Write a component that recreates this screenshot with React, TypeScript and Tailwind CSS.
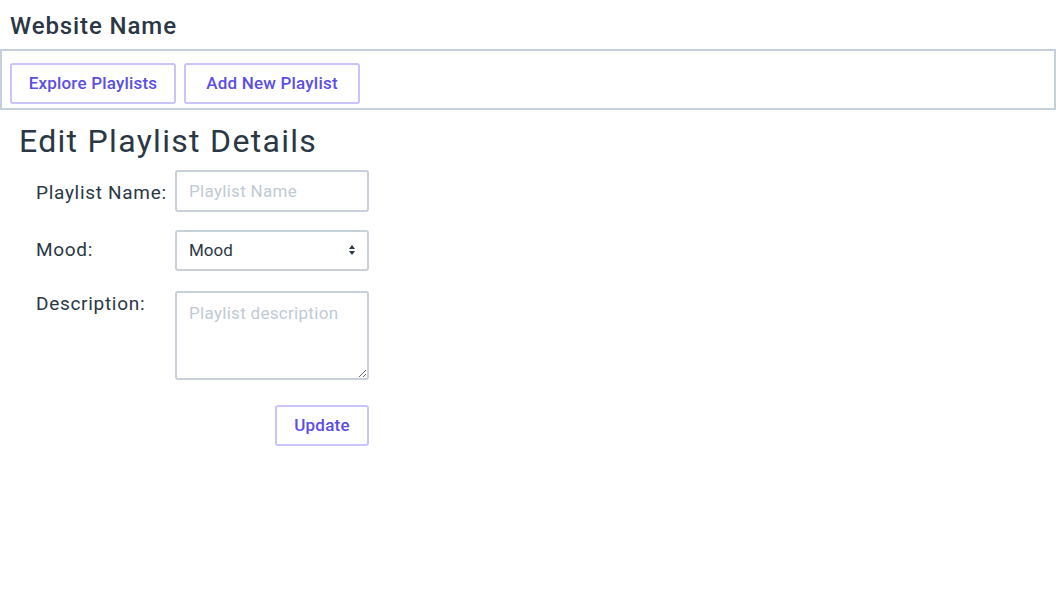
import React from 'react';

export default function App() {
    const font = { fontFamily: 'Roboto, "Liberation Sans", sans-serif' };
    return (
        <div className="min-h-screen bg-white text-[#2a3744]" style={font}>
            <header className="h-[49px] px-[10px] pt-[10px]">
                <h1 className="text-[24px] font-medium leading-[32px] tracking-[0.9px]">Website Name</h1>
            </header>

            <nav className="h-[61px] border-2 border-[#c5d0da] px-[8px] pt-[12px] flex gap-[8px]">
                {[
                    { label: 'Explore Playlists', w: 'w-[166px]' },
                    { label: 'Add New Playlist', w: 'w-[176px]' },
                ].map((b) => (
                    <button
                        key={b.label}
                        className={`${b.w} h-[41px] border-2 border-[#c9c4fb] rounded-[3px] text-[17px] font-medium tracking-[0.2px] text-[#5a4ee6] bg-white`}
                    >
                        {b.label}
                    </button>
                ))}
            </nav>

            <main className="px-[19px] pt-[11px]">
                <h2 className="text-[32px] leading-[40px] text-[#2a3744] tracking-[1.3px]">Edit Playlist Details</h2>

                <form className="ml-[17px] mt-[9px] grid grid-cols-[139px_194px] gap-y-[17px] items-start">
                    <label className="text-[19px] leading-[40px] tracking-[0.7px] pt-[3px]">Playlist Name:</label>
                    <input
                        placeholder="Playlist Name"
                        className="h-[42px] border-2 border-[#c8d0d9] rounded-[3px] px-[12px] text-[17px] tracking-[0.3px] placeholder:text-[#c0cad4] outline-none"
                    />

                    <label className="text-[19px] leading-[40px] tracking-[0.7px]">Mood:</label>
                    <div className="relative">
                        <select className="appearance-none w-full h-[41px] border-2 border-[#c8d0d9] rounded-[3px] px-[12px] text-[17px] bg-white text-[#2a3744] outline-none">
                            <option>Mood</option>
                        </select>
                        <svg className="absolute right-[13px] top-[14px] pointer-events-none" width="8" height="12" viewBox="0 0 8 12">
                            <path d="M4 1 L7 5 H1 Z" fill="#2a3744" />
                            <path d="M4 11 L7 7 H1 Z" fill="#2a3744" />
                        </svg>
                    </div>

                    <label className="text-[19px] leading-[30px] tracking-[0.7px] mt-[1px]">Description:</label>
                    <textarea
                        placeholder="Playlist description"
                        className="h-[89px] border-2 border-[#c8d0d9] rounded-[3px] px-[12px] py-[8px] text-[17px] tracking-[0.3px] placeholder:text-[#c0cad4] outline-none resize-y mt-[3px]"
                    />

                    <div />
                    <div className="flex justify-end mt-[8px]">
                        <button
                            type="button"
                            className="h-[41px] w-[94px] border-2 border-[#c9c4fb] rounded-[3px] text-[17px] font-medium tracking-[0.2px] text-[#5a4ee6] bg-white"
                        >
                            Update
                        </button>
                    </div>
                </form>
            </main>
        </div>
    );
}
